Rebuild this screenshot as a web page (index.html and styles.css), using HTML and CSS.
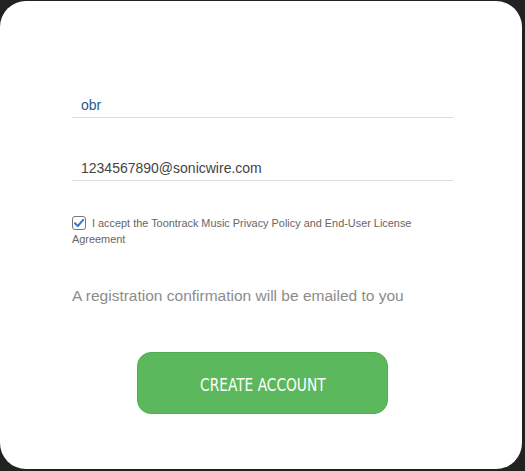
FILE: index.html
```html
<!DOCTYPE html>
<html lang="en">
<head>
    <meta charset="UTF-8">
    <meta name="viewport" content="width=device-width, initial-scale=1.0">
    <title>Create Account</title>
    <link rel="stylesheet" href="styles.css">
</head>
<body>

    <div class="card">
        <!-- Formulario de registro -->
        <form class="register-form">
            <input type="text" class="field field-name" value="obr">
            <input type="email" class="field" value="1234567890@sonicwire.com">

            <label class="accept">
                <span class="check-box">
                    <svg width="12" height="12" viewBox="0 0 12 12">
                        <path d="M2 6.2 L4.8 9 L10.2 2.8" fill="none" stroke="#2e7bd0" stroke-width="2" stroke-linecap="round" stroke-linejoin="round"/>
                    </svg>
                </span>I accept the Toontrack Music Privacy Policy and End-User License Agreement
            </label>

            <p class="note">A registration confirmation will be emailed to you</p>

            <div class="actions">
                <button type="button" class="create-btn"><span class="btn-label">CREATE ACCOUNT</span></button>
            </div>
        </form>
    </div>

</body>
</html>
```

FILE: styles.css
```css
html, body {
    margin: 0;
    padding: 0;
    background-color: #222;
}

body {
    font-family: "Liberation Sans", Arial, sans-serif;
    height: 471px;
    overflow: hidden;
}

.card {
    width: 522px;
    height: 468px;
    margin-top: 1px;
    background-color: #fff;
    border-radius: 26px;
    box-sizing: border-box;
    padding: 91px 0 0 72px;
}

.register-form {
    width: 381px;
}

.field {
    display: block;
    width: 100%;
    height: 26px;
    box-sizing: border-box;
    padding: 0 9px;
    border: none;
    border-bottom: 1px solid #ddd;
    font-family: "Liberation Sans", Arial, sans-serif;
    font-size: 14px;
    color: #444;
    background: transparent;
    outline: none;
}

.field + .field {
    margin-top: 37px;
}

.field-name {
    color: #2a5a8c;
}

.accept {
    display: block;
    margin-top: 34px;
    font-size: 10.9px;
    line-height: 16px;
    color: #666;
}

.check-box {
    display: inline-block;
    width: 12px;
    height: 12px;
    border: 1px solid #777;
    border-radius: 3px;
    vertical-align: -3px;
    margin-right: 6px;
    background: #fff;
}

.check-box svg {
    display: block;
}

.note {
    margin: 40px 0 0;
    font-size: 15.5px;
    line-height: 18px;
    color: #8c8c8c;
}

.actions {
    margin-top: 47px;
    padding-left: 65px;
}

.create-btn {
    width: 251px;
    height: 62px;
    padding: 0;
    background-color: #5cb85c;
    border: 1px solid #4cae4c;
    border-radius: 14px;
    color: #fff;
    font-family: "DejaVu Sans Condensed", "DejaVu Sans", sans-serif;
    font-size: 18px;
    cursor: pointer;
}

.btn-label {
    display: inline-block;
    transform: scaleX(0.85);
    padding-top: 2px;
}
```
